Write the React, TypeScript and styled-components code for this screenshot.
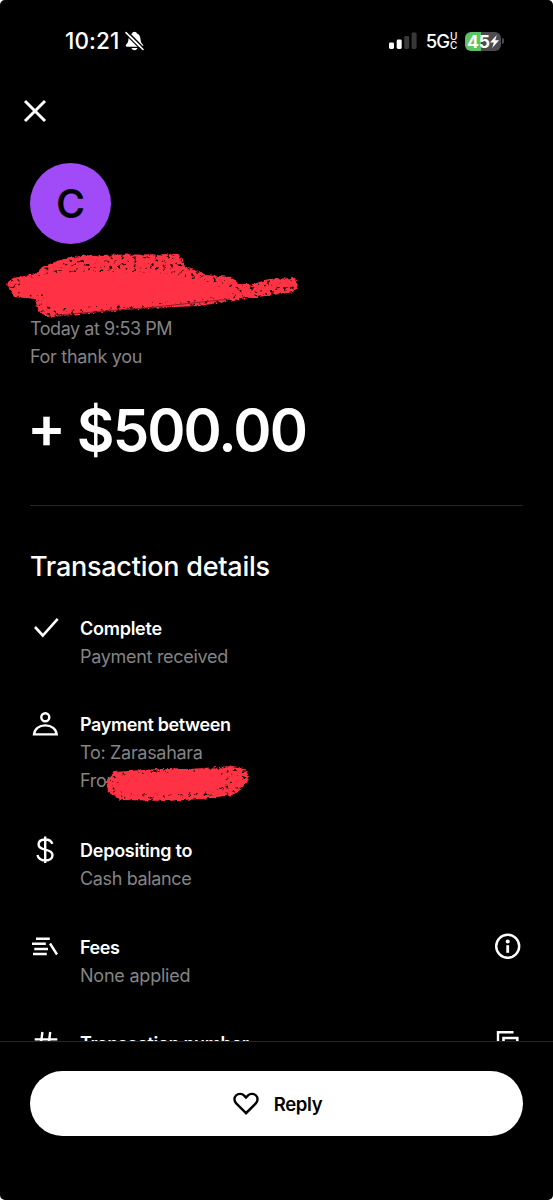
import React from "react";
import styled, { createGlobalStyle } from "styled-components";

const Global = createGlobalStyle`
  html, body { margin: 0; padding: 0; background: #fff; }
  * { box-sizing: border-box; }
  svg { display: block; flex: none; overflow: visible; }
`;

const Screen = styled.main`
  width: 553px;
  height: 1200px;
  overflow: hidden;
  display: flex;
  flex-direction: column;
  background: #000;
  color: #fff;
  border-radius: 5px;
  font-family: Inter, "Liberation Sans", sans-serif;
`;

const StatusBar = styled.header`
  height: 82px;
  flex: none;
  display: flex;
  align-items: center;
  justify-content: space-between;
  padding: 0 49px 0 65px;
`;

const StatusGroup = styled.div`
  display: flex;
  align-items: center;
`;

const Clock = styled.span`
  font-size: 22.5px;
  line-height: 28px;
  font-weight: 500;
  letter-spacing: 0.1px;
  margin-right: 6px;
`;

const Network = styled.span`
  display: flex;
  align-items: center;
  font-size: 18.5px;
  font-weight: 500;
  letter-spacing: -1px;
  margin: 0 7.5px 0 9px;
`;

const NetworkSuffix = styled.span`
  display: flex;
  flex-direction: column;
  font-size: 10px;
  line-height: 9px;
  font-weight: 500;
  letter-spacing: 0;
  margin-left: 1px;
`;

const Battery = styled.span`
  display: flex;
  align-items: center;
  gap: 1px;
`;

const BatteryBody = styled.span<{ $level: number }>`
  display: flex;
  align-items: center;
  justify-content: center;
  width: 36px;
  height: 19px;
  border-radius: 6px;
  background: linear-gradient(90deg, #5dc466 ${(p) => p.$level}%, #4c4c50 ${(p) => p.$level}%);
  font-size: 17.5px;
  font-weight: 700;
  letter-spacing: 0;
`;

const BatteryTip = styled.span`
  width: 2px;
  height: 6px;
  border-radius: 0 2px 2px 0;
  background: #4c4c50;
`;

const CloseRow = styled.div`
  height: 81px;
  flex: none;
  padding: 17px 23px;
`;

const IconButton = styled.button`
  display: block;
  padding: 0;
  border: 0;
  background: none;
  color: inherit;
`;

const Content = styled.div`
  height: 878px;
  flex: none;
  overflow: hidden;
  padding: 0 30px;
`;

const Avatar = styled.div`
  width: 81px;
  height: 81px;
  border-radius: 50%;
  display: flex;
  align-items: center;
  justify-content: center;
  background: #a14bf8;
  color: #000;
  font-size: 39px;
  font-weight: 600;
`;

const NameBlock = styled.div`
  height: 71px;
  margin-left: -30px;
`;

const Line = styled.p<{ $spacing?: number }>`
  margin: 0;
  color: #848484;
  font-size: 18px;
  line-height: 28px;
  font-weight: 400;
  letter-spacing: ${(p) => p.$spacing ?? -0.3}px;
  white-space: nowrap;
`;

const Amount = styled.h1`
  margin: 24px 0 0 -3px;
  height: 110px;
  font-size: 58px;
  line-height: 70px;
  font-weight: 600;
  letter-spacing: -1.9px;
  white-space: nowrap;
`;

const Sign = styled.span`
  vertical-align: 3px;
  line-height: 1;
`;

const Divider = styled.hr`
  height: 1px;
  margin: 0;
  border: 0;
  background: #262626;
`;

const SectionTitle = styled.h2`
  margin: 44px 0 30px;
  font-size: 27px;
  line-height: 34px;
  font-weight: 550;
  letter-spacing: -0.25px;
  white-space: nowrap;
`;

const DetailList = styled.div`
  display: flex;
  flex-direction: column;
`;

const DetailRow = styled.section<{ $gap?: number }>`
  display: flex;
  align-items: flex-start;
  margin-bottom: ${(p) => p.$gap ?? 39}px;
`;

const DetailIcon = styled.div`
  width: 50px;
  flex: none;
`;

const DetailText = styled.div<{ $top?: number }>`
  flex: 1;
  padding-top: ${(p) => p.$top ?? 1}px;
`;

const Label = styled.h3<{ $spacing?: number }>`
  margin: 0;
  font-size: 18px;
  line-height: 28px;
  font-weight: 600;
  letter-spacing: ${(p) => p.$spacing ?? -0.25}px;
  white-space: nowrap;
`;

const RedactedLine = styled.div`
  position: relative;
`;

const LineScribble = styled.div`
  position: absolute;
  left: 0;
  top: 0;
`;

const Footer = styled.footer`
  flex: 1;
  border-top: 1px solid #262626;
  padding: 29px 30px 0;
`;

const ReplyButton = styled.button`
  width: 100%;
  height: 65px;
  display: flex;
  align-items: center;
  justify-content: center;
  gap: 15px;
  border: 0;
  padding: 0 0 0 2px;
  border-radius: 33px;
  background: #fff;
  color: #000;
  font-family: inherit;
  font-size: 18.5px;
  font-weight: 580;
  letter-spacing: -0.3px;
`;

const BellOff = () => (
  <svg width="19" height="20" viewBox="0 0 19 20">
    <path d="M9.500.8c-1.200 0-2.200.8-2.400 1.800C4.700 3.500 3.700 5.500 3.500 8c-.2 3-1 4.200-2.300 5.500-.9 1-.4 2.200.8 2.200h15c1.200 0 1.700-1.200.8-2.200C16.500 12.200 15.700 11 15.500 8c-.2-2.500-1.200-4.500-3.600-5.400C11.700 1.600 10.700.8 9.500.8z" fill="#fff" />
    <path d="M6.500 17h6c-.3 1.300-1.500 2.200-3 2.200S6.800 18.300 6.500 17z" fill="#fff" />
    <path d="M2.500 .6 19 17.200" stroke="#000" strokeWidth="1.500" />
    <path d="M.3 2.800 16.800 19.400" stroke="#000" strokeWidth="1.300" />
    <path d="M1 1.600 18 18.500" stroke="#fff" strokeWidth="1.600" strokeLinecap="round" />
  </svg>
);

const Signal = () => (
  <svg width="28" height="18" viewBox="0 0 28 18">
    <rect x="0" y="10.500" width="5" height="6.500" rx="1.400" fill="#fff" />
    <rect x="7.700" y="7.500" width="5" height="9.500" rx="1.400" fill="#fff" />
    <rect x="15.200" y="4" width="5" height="13" rx="1.400" fill="#383838" />
    <rect x="22.600" y="0.500" width="5" height="16.500" rx="1.400" fill="#383838" />
  </svg>
);

const Bolt = () => (
  <svg width="9" height="13" viewBox="0 0 9 13">
    <path d="M6.800 0 0 7.400h3.800L2.200 13 9 5.300H5.200z" fill="#fff" />
  </svg>
);

const Close = () => (
  <svg width="24" height="24" viewBox="0 0 24 24">
    <path d="M2 2 22 22M22 2 2 22" stroke="#fff" strokeWidth="3" />
  </svg>
);

const Check = () => (
  <svg width="32" height="28" viewBox="0 0 32 28">
    <path d="M5 13 12.800 21.500 27.700 4.800" stroke="#fff" strokeWidth="2.600" fill="none" />
  </svg>
);

const Person = () => (
  <svg width="32" height="28" viewBox="0 0 32 28">
    <circle cx="15.300" cy="7.300" r="4" stroke="#fff" strokeWidth="2.400" fill="none" />
    <path d="M4 24.400C4.500 19 9 15.400 15.300 15.400S26.200 19 26.700 24.400z" stroke="#fff" strokeWidth="2.400" fill="none" />
  </svg>
);

const Dollar = () => (
  <svg width="32" height="28" viewBox="0 0 32 28">
    <path transform="translate(0 .6)" d="M15.200 0v26.500M22.300 7.300C21.500 4.500 19 2.900 15.200 2.900c-4 0-6.600 1.900-6.600 5 0 3.300 2.800 4.300 6.600 5.200 4.300 1 7.300 2 7.300 5.500 0 3.300-2.900 5.300-7 5.300-4.400 0-7.300-2-8-5.400" stroke="#fff" strokeWidth="2.400" fill="none" />
  </svg>
);

const Coins = () => (
  <svg width="32" height="28" viewBox="0 0 32 28">
    <path d="M6 6.700h13.800M2 11.800h13.800M4.300 17h13.700M3 22h13.800M20 11.500 27 22.500" stroke="#fff" strokeWidth="2.400" fill="none" />
  </svg>
);

const Hash = () => (
  <svg width="32" height="28" viewBox="0 0 32 28">
    <path d="M4.700 10.400h22.600M3.500 18.400h22.600M12.400 3 9.500 26.500M20.200 3 17.300 26.500" stroke="#fff" strokeWidth="2.400" fill="none" />
  </svg>
);

const Info = () => (
  <svg width="28" height="28" viewBox="0 0 28 28">
    <circle cx="12.700" cy="14.300" r="11.500" stroke="#fff" strokeWidth="2.400" fill="none" />
    <circle cx="12.700" cy="9.400" r="2" fill="#fff" />
    <path d="M12.700 13.200v7.600" stroke="#fff" strokeWidth="2.800" />
  </svg>
);

const Copy = () => (
  <svg width="28" height="28" viewBox="0 0 28 28">
    <path d="M3 20V3.200h15.500" stroke="#fff" strokeWidth="2.400" fill="none" />
    <path d="M8.500 9h13.800v14.500H8.500z" stroke="#fff" strokeWidth="2.600" fill="none" />
  </svg>
);

const Heart = () => (
  <svg width="26" height="24" viewBox="0 0 26 24">
    <path d="M13 21.200 3.200 11.400C.9 9 .9 5.500 3 3.500c2.400-2.300 6-2.100 8.200.1L13 5.500l1.800-1.900c2.200-2.200 5.800-2.400 8.200-.1 2.100 2 2.100 5.500-.2 7.900z" stroke="#000" strokeWidth="2.400" fill="none" />
  </svg>
);

const BrushFilters = () => (
  <defs>
    <filter id="rough" x="-5%" y="-20%" width="110%" height="140%">
      <feTurbulence type="fractalNoise" baseFrequency="0.2" numOctaves="2" seed="4" result="n" />
      <feDisplacementMap in="SourceGraphic" in2="n" scale="4" xChannelSelector="R" yChannelSelector="G" />
    </filter>
    <filter id="grain" x="-5%" y="-20%" width="110%" height="140%" colorInterpolationFilters="sRGB">
      <feTurbulence type="fractalNoise" baseFrequency="0.24 0.3" numOctaves="3" seed="9" result="n" />
      <feDisplacementMap in="SourceGraphic" in2="n" scale="4" xChannelSelector="R" yChannelSelector="G" result="d" />
      <feColorMatrix in="n" type="matrix" values="0 0 0 0 0  0 0 0 0 0  0 0 0 0 0  0 0 6 0 -1.400" result="mask" />
      <feComposite in="d" in2="mask" operator="in" />
    </filter>
  </defs>
);

const NameScribble = () => (
  <svg width="310" height="70" viewBox="0 244 310 70">
    <BrushFilters />
    <path filter="url(#grain)" fill="#ff3344" d="M7 284 13 278 36 274 42 267 60 260 84 255 178 254 183 259 184 267 195 270 205 275 232 277 238 284 254 284 268 279 295 278 298 286 294 292 280 294 234 300 200 306 150 308 100 312 52 317 42 314 36 306 36 299 14 297z" />
    <path filter="url(#rough)" fill="#ff3344" d="M20 284 36 277 50 273 80 272 130 272 170 274 195 279 218 285 232 291 225 296 190 301 150 303 100 306 60 308 46 303 42 294 22 293z" />
    <path d="M58 315 100 311.500 150 307.500 230 299" stroke="#5e141b" strokeWidth="0.700" fill="none" />
  </svg>
);

const FromScribble = () => (
  <svg width="200" height="28" viewBox="80 767 200 28">
    <path filter="url(#grain)" fill="#ff3344" d="M106 781 114 772 158 769 190 769 232 766 245 768 249 777 243 788 233 795 202 799 166 801 120 800 108 792z" />
    <path filter="url(#rough)" fill="#ff3344" d="M120 781 124 775 160 773 220 771 224 776 220 787 200 793 164 795 126 793 116 789z" />
  </svg>
);

export default function App() {
  return (
    <>
      <Global />
      <Screen>
        <StatusBar>
          <StatusGroup>
            <Clock>10:21</Clock>
            <BellOff />
          </StatusGroup>
          <StatusGroup>
            <Signal />
            <Network>
              5G
              <NetworkSuffix>
                <span>U</span>
                <span>C</span>
              </NetworkSuffix>
            </Network>
            <Battery>
              <BatteryBody $level={45}>
                45
                <Bolt />
              </BatteryBody>
              <BatteryTip />
            </Battery>
          </StatusGroup>
        </StatusBar>
        <CloseRow>
          <IconButton aria-label="Close">
            <Close />
          </IconButton>
        </CloseRow>
        <Content>
          <Avatar>C</Avatar>
          <NameBlock>
            <NameScribble />
          </NameBlock>
          <Line $spacing={-0.45}>Today at 9:53 PM</Line>
          <Line>For thank you</Line>
          <Amount><Sign>+</Sign> $500.00</Amount>
          <Divider />
          <SectionTitle>Transaction details</SectionTitle>
          <DetailList>
            <DetailRow>
              <DetailIcon><Check /></DetailIcon>
              <DetailText>
                <Label>Complete</Label>
                <Line>Payment received</Line>
              </DetailText>
            </DetailRow>
            <DetailRow $gap={41}>
              <DetailIcon><Person /></DetailIcon>
              <DetailText>
                <Label $spacing={-0.4}>Payment between</Label>
                <Line>To: Zarasahara</Line>
                <RedactedLine>
                  <Line>From:</Line>
                  <LineScribble><FromScribble /></LineScribble>
                </RedactedLine>
              </DetailText>
            </DetailRow>
            <DetailRow>
              <DetailIcon><Dollar /></DetailIcon>
              <DetailText>
                <Label>Depositing to</Label>
                <Line $spacing={-0.36}>Cash balance</Line>
              </DetailText>
            </DetailRow>
            <DetailRow>
              <DetailIcon><Coins /></DetailIcon>
              <DetailText $top={2}>
                <Label $spacing={-0.4}>Fees</Label>
                <Line $spacing={-0.22}>None applied</Line>
              </DetailText>
              <IconButton aria-label="About fees"><Info /></IconButton>
            </DetailRow>
            <DetailRow>
              <DetailIcon><Hash /></DetailIcon>
              <DetailText>
                <Label $spacing={-0.34}>Transaction number</Label>
              </DetailText>
              <IconButton aria-label="Copy"><Copy /></IconButton>
            </DetailRow>
          </DetailList>
        </Content>
        <Footer>
          <ReplyButton>
            <Heart />
            Reply
          </ReplyButton>
        </Footer>
      </Screen>
    </>
  );
}
